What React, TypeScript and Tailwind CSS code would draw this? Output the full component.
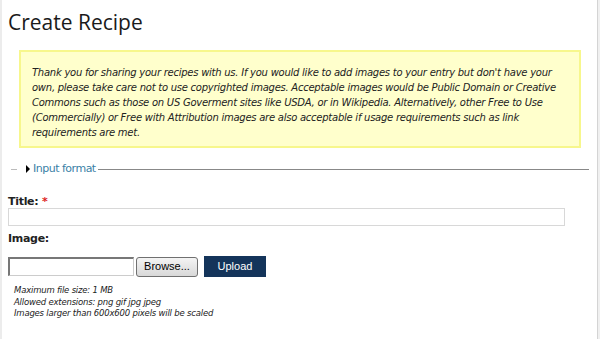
import React from "react";

export default function App() {
  return (
    <div className="w-[600px] h-[339px] bg-white flex overflow-hidden" style={{ fontFamily: "'DejaVu Sans', Verdana, sans-serif" }}>
      <div className="w-[2px] bg-[#ececec] shrink-0" />
      <div className="flex-1 pl-[6px] pr-[8px] pt-[8px]">
        <h1 className="text-[21px] leading-[28px] text-[#1a1a1a] font-normal" style={{ fontFamily: "'Open Sans', sans-serif" }}>Create Recipe</h1>
        <div className="mt-[14px] ml-[11px] mr-[8px] border-2 border-[#f7f78c] bg-[#ffffcc] pl-[11px] pr-[10px] pt-[13px] pb-[6px]">
          <p className="text-[10px] leading-[15px] italic text-[#222] tracking-[-0.25px]">
            Thank you for sharing your recipes with us. If you would like to add images to your entry but don't have your own, please take care not to use copyrighted images. Acceptable images would be Public Domain or Creative Commons such as those on US Goverment sites like USDA, or in Wikipedia. Alternatively, other Free to Use (Commercially) or Free with Attribution images are also acceptable if usage requirements such as link requirements are met.
          </p>
        </div>
        <div className="mt-[14px] flex items-center h-[14px]">
          <div className="w-[6px] h-px bg-[#bbb] ml-[3px]" />
          <div className="ml-[9px] w-0 h-0 border-t-[4px] border-b-[4px] border-l-[4px] border-t-transparent border-b-transparent border-l-black" />
          <span className="ml-[3px] text-[11px] text-[#3a7fa6] tracking-[-0.5px]">Input format</span>
          <div className="flex-1 h-px bg-[#888] ml-[2px]" />
        </div>
        <div className="mt-[19px] text-[11px] font-bold text-[#222] leading-[13px] tracking-[-0.3px]">
          Title: <span className="text-[#dd2222]">*</span>
        </div>
        <div className="mt-[0px] w-[557px] h-[18px] border border-[#d8d8d8] bg-white" />
        <div className="mt-[6px] text-[11px] font-bold text-[#222] leading-[14px] tracking-[-0.3px]">Image:</div>
        <div className="mt-[10px] flex items-center">
          <div className="w-[126px] h-[19px] bg-white border border-[#ccc] border-t-[#777] border-l-[#777] border-t-2 border-l-2" />
          <div className="ml-[2px] w-[62px] h-[20px] rounded-[3px] border border-[#707070] bg-gradient-to-b from-[#f4f4f4] to-[#d8d8d8] flex items-center justify-center text-[11px] text-black" style={{ fontFamily: "'Liberation Sans', Arial, sans-serif" }}>Browse...</div>
          <div className="ml-[6px] w-[62px] h-[21px] bg-[#14345a] flex items-center justify-center text-[11px] text-white" style={{ fontFamily: "'Liberation Sans', Arial, sans-serif" }}>Upload</div>
        </div>
        <div className="mt-[8px] ml-[6px] text-[8.5px] italic leading-[11.5px] text-[#222] tracking-[-0.2px]">
          <div>Maximum file size: 1 MB</div>
          <div>Allowed extensions: png gif jpg jpeg</div>
          <div>Images larger than 600x600 pixels will be scaled</div>
        </div>
      </div>
      <div className="w-px bg-[#d4d4d4] shrink-0" />
      <div className="w-[2px] bg-[#f0f0f0] shrink-0" />
    </div>
  );
}
